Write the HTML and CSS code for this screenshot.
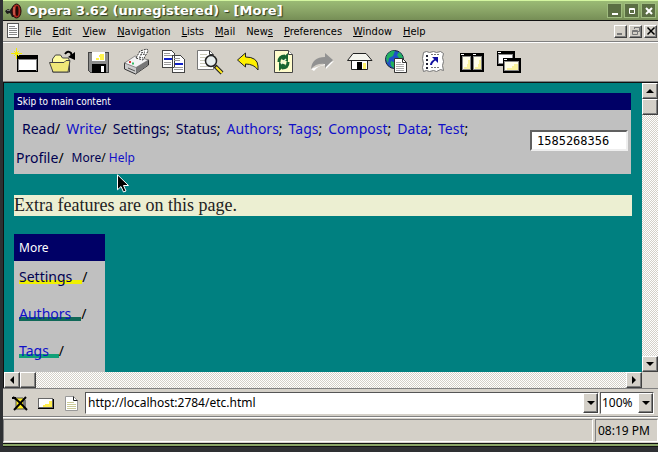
FILE: index.html
```html
<!DOCTYPE html>
<html lang="en">
<head>
<meta charset="utf-8">
<title>Opera 3.62 (unregistered) - [More]</title>
<link rel="stylesheet" href="styles.css">
</head>
<body>
<div class="window">
  <header class="titlebar">
    <svg class="app-icon" viewBox="0 0 18 16"><path fill="#1c1c1c" d="M0 8l3-2 2 1 3-4h2v11H7l-2-4-3 1z"/><path fill="#777" d="M2 7h3v1H2z"/><ellipse cx="11.500" cy="8" rx="4.500" ry="7" fill="#a8281e" stroke="#1a0a0a"/><ellipse cx="12" cy="8" rx="1.500" ry="5" fill="#220a08"/><path stroke="#e08070" d="M9 4v8"/></svg>
    <h1 class="title">Opera 3.62 (unregistered) - [More]</h1>
    <button class="frame-btn" aria-label="Minimize"><svg viewBox="0 0 12 12"><path fill="#fff" d="M3 8h6v2H3z"/></svg></button>
    <button class="frame-btn" aria-label="Maximize"><svg viewBox="0 0 12 12"><path fill="none" stroke="#fff" d="M3.500 3.500h5v5h-5zM3 4.500h6"/></svg></button>
    <button class="frame-btn" aria-label="Close"><svg viewBox="0 0 12 12"><path stroke="#fff" stroke-width="2" d="M3 3l6 6M9 3l-6 6"/></svg></button>
  </header>
  <nav class="menubar" aria-label="Application">
    <svg class="doc-icon" viewBox="0 0 12 16" shape-rendering="crispEdges"><path fill="#fff" stroke="#555" d="M.5 .5h11v14H.5z"/><path stroke="#888" d="M2 3.500h6M2 5.500h8M2 7.500h8M2 9.500h8M2 11.500h8"/></svg>
    <button class="menu"><u>F</u>ile</button>
    <button class="menu"><u>E</u>dit</button>
    <button class="menu"><u>V</u>iew</button>
    <button class="menu"><u>N</u>avigation</button>
    <button class="menu"><u>L</u>ists</button>
    <button class="menu"><u>M</u>ail</button>
    <button class="menu">New<u>s</u></button>
    <button class="menu"><u>P</u>references</button>
    <button class="menu"><u>W</u>indow</button>
    <button class="menu"><u>H</u>elp</button>
    <div class="doc-controls">
      <button class="mini raised" aria-label="Minimize page"><svg viewBox="0 0 10 10"><path fill="#777" d="M1 7h5v2H1z"/></svg></button>
      <button class="mini raised" aria-label="Restore page"><svg viewBox="0 0 10 10"><path fill="none" stroke="#777" d="M3.500 3V1.500h5v4H7M3 1.500h6M1.500 4.500h5v4h-5zM1 5.500h6"/></svg></button>
      <button class="mini raised" aria-label="Close page"><svg viewBox="0 0 10 10"><path stroke="#000" stroke-width="1.500" d="M1.500 1.500l7 7M8.500 1.500l-7 7"/></svg></button>
    </div>
  </nav>
  <div class="toolbar">
    <button class="tool" aria-label="New window"><svg viewBox="0 0 26 26" shape-rendering="crispEdges"><path d="M3 6h21v17H3z"/><path fill="#fff" d="M5 11h17v10H5z"/><path fill="#888" d="M5 10h17v1H5zM4 10h1v12H4zM22 10h1v12h-1z"/><path stroke="#f4ec00" fill="none" d="M2.500 -1v11M-3 4.500h11M0 2l5 5M5 2L0 7"/></svg></button>
    <button class="tool" aria-label="Open"><svg viewBox="0 0 26 26"><path fill="#fffca0" stroke="#444" d="M1.500 23V10l3-4h5l2 3h6l1 3v11z"/><path fill="#efe778" stroke="#444" d="M-1.500 13.500H13l2-2h4l-2 11.500H2z"/><path fill="none" stroke="#000" stroke-width="2" d="M14 5q3-4 6-1l1 4"/><path d="M17 8l7 3V3z"/></svg></button>
    <button class="tool" aria-label="Save"><svg viewBox="0 0 26 26" shape-rendering="crispEdges"><path fill="#8c8c8c" stroke="#444" d="M.5 3.500h20v20h-18l-2-2z"/><path fill="#fff" d="M4 3h13v9H4z"/><path fill="#fff34d" d="M12 5h4v6h-4V8h-1zM8 9h3v2H8z"/><path d="M4 15h14v9H4z"/><path fill="#fff" d="M13 17h3v6h-3z"/></svg></button>
    <button class="tool" aria-label="Print"><svg viewBox="0 0 26 26"><path fill="#ccc" stroke="#333" d="M-.5 14v6l11 5 13-9v-5z"/><path fill="#777" d="M11 18.500l12-7.500v5l-12 8.500z"/><path fill="#f3f3f3" stroke="#666" stroke-width=".7" d="M-.5 14L10 7l13.500 4L11 18.500z"/><path stroke="#555" d="M3 19l7 3"/><path fill="#fff" stroke="#333" stroke-dasharray="2 1" d="M11 9l4-7 7-2 1 2-5 9z"/><path stroke="#333" stroke-dasharray="2 1" d="M16 4l4-1M15 6l5-1M14 8l4 1"/><path stroke="#d33" stroke-width="2" d="M4 13h2"/><path stroke="#3b6" stroke-width="2" d="M7 14.500h2"/></svg></button>
    <button class="tool" aria-label="Copy"><svg viewBox="0 0 26 26" shape-rendering="crispEdges"><path fill="#fff" stroke="#444" d="M.5 1.500h9l3 3v14H.5zM10.500 6.500h8l4 4v13h-12z"/><path stroke="#999" d="M2 4.500h6M2 6.500h8M2 13.500h7M2 15.500h7M12 9.500h6M12 11.500h6M12 18.500h9M12 20.500h9"/><path fill="#1020c8" d="M2 9h8v2H2zM13 14h8v2h-8z"/></svg></button>
    <button class="tool" aria-label="Find"><svg viewBox="0 0 26 26"><path fill="#fff" stroke="#777" d="M-1.500 1.500h12l4 4v15h-16z"/><path fill="none" stroke="#333" d="M10.500 1.500v4h4"/><path stroke="#ccb" d="M1 5.500h7M1 8.500h6M1 11.500h6M1 14.500h7M1 17.500h10"/><circle cx="12" cy="12" r="5.500" fill="#e8eeee" stroke="#222" stroke-width="1.500"/><path stroke="#222" stroke-width="4" d="M16 17l7 7"/><path stroke="#ffe920" stroke-width="2" d="M17 18l6 6"/></svg></button>
    <button class="tool" aria-label="Back"><svg viewBox="0 0 26 26"><path fill="#fff000" stroke="#222" d="M1.500 11l8-7v4q12 0 12.500 9v4q-4-6-12.500-6v3z"/></svg></button>
    <button class="tool" aria-label="Reload"><svg viewBox="0 0 26 26"><path fill="#fffccc" stroke="#444" d="M1.500 1.500h14l4 4v18h-18z"/><path fill="#fff" stroke="#444" d="M15.500 1.500v4h4"/><path fill="none" stroke="#17642f" stroke-width="3" d="M6 13q0-6 6-6M15 13q0 6-6 6"/><path fill="#17642f" d="M15 4v9L8 10zM6 22v-9l7 3z"/><path stroke="#e8f4d8" stroke-width="1.500" d="M8 15l5-5"/></svg></button>
    <button class="tool" aria-label="Forward"><svg viewBox="0 0 26 26"><path fill="#fff" d="M24 12l-8 8v-4Q8 16 4 22l-3-2z"/><path fill="#929292" d="M23 11l-8-7v4Q2 8 1 20q5-6 14-5v4z"/></svg></button>
    <button class="tool" aria-label="Home"><svg viewBox="0 0 26 26"><path fill="#fff" stroke="#222" d="M4.500 10v10.500h16V10"/><path fill="#f5f5ee" stroke="#222" d="M6 4.500h13l6 7H.5z"/><path d="M10 13h5v8h-5z"/><path fill="#fff36b" d="M16 14h3v6h-3z"/></svg></button>
    <button class="tool" aria-label="Web page"><svg viewBox="0 0 26 26"><circle cx="10.500" cy="10.500" r="9" fill="#1e50c8" stroke="#123"/><path fill="#20b060" d="M3 6q4-5 8-4l-2 5-4 2-1 5q-3-4-1-8zM15 3q4 3 4 7l-4-1-2-3zM7 12l5 2-2 5q-5-2-3-7z"/><path fill="#fff" stroke="#333" d="M10.500 9.500h8l4 4v10h-12z"/><path fill="none" stroke="#333" d="M18.500 9.500v4h4"/><path stroke="#aaa" d="M12 13.500h5M12 15.500h8M12 17.500h8M12 19.500h8M12 21.500h8"/></svg></button>
    <button class="tool" aria-label="Bookmarks"><svg viewBox="0 0 26 26"><path fill="#fff" stroke="#777" d="M2.500 3.500l3-1 3 1 4-1 3 1 4-1 3 2-1 4 1 4-1 4 1 5-3-1-4 2-3-1-4 1-3-1-3 1-1-4 1-4-1-5z"/><path stroke="#223" stroke-width="2" stroke-dasharray="2 2" d="M6 6v14"/><path fill="none" stroke="#1010a0" stroke-width="2" d="M10 16q0-3 5-6"/><path fill="#1010a0" d="M11 8h6v6z"/><path stroke="#777" stroke-dasharray="2 1" d="M10 18.500h8M10 5.500h8"/></svg></button>
    <button class="tool" aria-label="Tile"><svg viewBox="-2 0 26 26" shape-rendering="crispEdges"><path d="M0 4h24v19H0z"/><path fill="#fffee8" stroke="#888" d="M2.500 7.500h8v13h-8zM13.500 7.500h8v13h-8z"/><path fill="#faf3a0" d="M8 11h2v9H4v-2h3v-3h1zM19 11h2v9h-6v-2h3v-3h1z"/><path fill="#fff" d="M1 5h3v1H1zM13 5h3v1h-3z"/></svg></button>
    <button class="tool" aria-label="Cascade"><svg viewBox="-3 0 26 26" shape-rendering="crispEdges"><path d="M-1 2h18v15H-1z"/><path fill="#fff" stroke="#888" d="M.5 5.500h14v9H.5z"/><path d="M5 9h18v15H5z"/><path fill="#fffee8" stroke="#888" d="M6.500 12.500h14v9h-14z"/><path fill="#faf3a0" d="M16 15h4v6H9v-2h5v-2h2z"/><path fill="#fff" d="M0 3h3v1H0zM6 10h3v1H6z"/></svg></button>
  </div>
  <div class="viewport">
    <main class="page">
      <section class="site-header">
        <a class="skip" href="#main">Skip to main content</a>
        <div class="site-bar">
          <nav class="site-nav" aria-label="Site">
            <div class="nav-row first">
              <span><a class="seen" href="#">Read</a>/</span>
              <span><a href="#">Write</a>/</span>
              <span><a class="seen" href="#">Settings</a>;</span>
              <span><a class="seen" href="#">Status</a>;</span>
              <span><a href="#">Authors</a>;</span>
              <span><a href="#">Tags</a>;</span>
              <span><a href="#">Compost</a>;</span>
              <span><a href="#">Data</a>;</span>
              <span><a href="#">Test</a>;</span>
            </div>
            <div class="nav-row">
              <span><a class="seen" href="#">Profile</a>/</span>
              <span class="small"><a class="seen" href="#">More</a>/ <a href="#">Help</a></span>
            </div>
          </nav>
          <input class="stamp" type="text" value="1585268356" aria-label="Timestamp">
        </div>
      </section>
      <p class="intro" id="main">Extra features are on this page.</p>
      <section class="side">
        <h2 class="side-title">More</h2>
        <div class="side-row"><a class="mark yellow seen" href="#">Settings</a>/</div>
        <div class="side-row"><a class="mark dark" href="#">Authors</a>/</div>
        <div class="side-row"><a class="mark green" href="#">Tags</a>/</div>
      </section>
      <svg class="pointer" viewBox="0 0 12 19"><path stroke="#fff" d="M.5 .8v15l3.500-3.300 2.500 5.500 2.500-1-2.500-5.500h5z"/></svg>
    </main>
    <div class="scroll vertical">
      <button class="raised arrow" aria-label="Scroll up"><svg viewBox="0 0 8 8"><path d="M4 2l4 4H0z"/></svg></button>
      <div class="raised thumb"></div>
      <button class="raised arrow last" aria-label="Scroll down"><svg viewBox="0 0 8 8"><path d="M4 6l4-4H0z"/></svg></button>
    </div>
    <div class="scroll horizontal">
      <button class="raised arrow" aria-label="Scroll left"><svg viewBox="0 0 8 8"><path d="M2 4l4-4v8z"/></svg></button>
      <div class="raised thumb"></div>
      <button class="raised arrow last" aria-label="Scroll right"><svg viewBox="0 0 8 8"><path d="M6 4L2 0v8z"/></svg></button>
    </div>
    <div class="corner"></div>
  </div>
  <div class="addressbar">
    <button class="status-tool" aria-label="Images off"><svg viewBox="0 0 18 18"><path fill="#ffee20" stroke="#555" d="M5 4h7l2 3v8H5z"/><path fill="#777" d="M12 6h3v9h-3z"/><path fill="none" stroke="#000" stroke-width="2" d="M2 3q6 4 14 13M15 3L3 16M1 4h4"/></svg></button>
    <button class="status-tool" aria-label="Window view"><svg viewBox="0 0 18 18" shape-rendering="crispEdges"><path fill="#fff" stroke="#666" d="M1.500 4.500h14v9h-14z"/><path fill="#ffee50" d="M8 10h4V7h3v6H6v-2h2z"/><path stroke="#000" d="M1 14.500h16M16.500 5v10"/></svg></button>
    <button class="status-tool" aria-label="Document view"><svg viewBox="0 0 18 18"><path fill="#fff" stroke="#999" d="M2.500 2.500h8l4 4v10h-12z"/><path fill="none" stroke="#222" d="M10.500 2.500v4h4"/><path stroke="#cc9" d="M4 8.500h7M4 10.500h9M4 12.500h9M4 14.500h9"/></svg></button>
    <div class="combo">
      <input class="url" type="text" value="http://localhost:2784/etc.html" aria-label="Address">
      <button class="raised drop" aria-label="Show addresses"><svg viewBox="0 0 8 8"><path d="M4 6l4-4H0z"/></svg></button>
    </div>
    <div class="combo zoom">
      <input class="level" type="text" value="100%" aria-label="Zoom">
      <button class="raised drop" aria-label="Zoom levels"><svg viewBox="0 0 8 8"><path d="M4 6l4-4H0z"/></svg></button>
    </div>
  </div>
  <footer class="statusbar">
    <div class="sunken message"></div>
    <div class="sunken clock">08:19 PM</div>
  </footer>
  <div class="frame-bottom"></div>
</div>
</body>
</html>
```
FILE: styles.css
```css
* { box-sizing: border-box; }

body {
  margin: 0;
  background: #2e3033;
  color: #000;
  font-family: "Noto Sans", sans-serif;
  overflow: hidden;
}

button, input { font: inherit; color: inherit; }
button { padding: 0; border: 0; background: none; display: flex; align-items: center; justify-content: center; }
svg { display: block; overflow: visible; }
a { color: #1010c8; text-decoration: none; }
a.seen { color: #000050; }

.window {
  height: 100vh;
  display: flex;
  flex-direction: column;
  padding: 0 0 5px 3px;
}

.titlebar {
  display: flex;
  align-items: center;
  gap: 4px;
  height: 21px;
  padding: 0 3px 0 2px;
  border-top: 1px solid #d3f5a0;
  border-bottom: 1px solid #111;
  background: linear-gradient(#9aba75, #8aa567 50%, #768e56);
}
.app-icon { width: 18px; height: 16px; }
.title {
  flex: 1;
  margin: 0;
  font: bold 13px "DejaVu Sans", sans-serif;
  color: #fff;
  text-shadow: 1px 1px 1px #2c3820;
}
.frame-btn {
  width: 13px;
  height: 13px;
  background: #5b6e43;
  outline: 1px solid #9fbc7e;
}
.frame-btn svg { width: 12px; height: 12px; }

.raised {
  background: #d4d0c8;
  border: 1px solid;
  border-color: #fff #404040 #404040 #fff;
  box-shadow: inset -1px -1px #808080;
}

.menubar {
  display: flex;
  align-items: center;
  height: 21px;
  padding: 0 1px 0 4px;
  background: #d4d0c8;
  border-bottom: 1px solid #808080;
  font-family: "DejaVu Sans Condensed", "DejaVu Sans", sans-serif;
  font-size: 11px;
  font-stretch: condensed;
}
.doc-icon { width: 12px; height: 16px; }
.menu { padding: 2px 5px 0 6px; display: block; line-height: 16px; }
.doc-controls { display: flex; gap: 2px; margin-left: auto; }
.mini { width: 13px; height: 13px; }
.mini svg { width: 10px; height: 10px; }

.toolbar {
  display: flex;
  align-items: center;
  height: 40px;
  padding-left: 5px;
  background: #d4d0c8;
  border-top: 1px solid #fff;
  border-bottom: 1px solid #808080;
}
.tool { width: 37px; height: 36px; }
.tool svg { width: 26px; height: 26px; }

.viewport {
  flex: 1;
  min-height: 0;
  display: grid;
  grid-template: minmax(0, 1fr) 16px / minmax(0, 1fr) 16px;
  border-top: 1px solid #111;
  border-left: 1px solid #111;
}
.page {
  position: relative;
  overflow: hidden;
  padding: 10px;
  background: #008080;
}
.site-header { margin-right: 1px; background: #c0c0c0; }
.skip {
  display: block;
  padding: 0 3px;
  background: #000066;
  color: #fff;
  font: 10px/17px "DejaVu Sans Condensed", "DejaVu Sans", sans-serif;
  font-stretch: condensed;
}
.site-bar { display: flex; align-items: flex-start; padding: 4px 3px 2px 2px; }
.site-nav { flex: 1; font-size: 14px; }
.nav-row { display: flex; gap: 6px; line-height: 29px; white-space: nowrap; }
.nav-row.first { padding-left: 6px; }
.nav-row .small { margin-left: 2px; font-size: 12px; }
.stamp {
  width: 98px;
  height: 21px;
  margin-top: 16px;
  padding: 0 5px;
  border: 2px solid;
  border-color: #606060 #eee #eee #606060;
  border-radius: 0;
  background: #fff;
  font: 12px "DejaVu Sans Mono", monospace;
}
.intro {
  margin: 21px 0 18px;
  background: #ecefd2;
  font: 18px/21px "Liberation Serif", serif;
  color: #222;
}
.side { width: 91px; height: 180px; background: #c0c0c0; }
.side-title {
  margin: 0;
  padding-left: 5px;
  background: #000066;
  color: #fff;
  font-size: 12px;
  font-weight: normal;
  line-height: 27px;
}
.side-row { padding: 6px 5px 11px; font-size: 14px; line-height: 20px; }
.mark { display: inline-block; height: 17px; line-height: 20px; padding-right: 10px; border-bottom: 4px solid; }
.mark.yellow { border-color: #f0f000; }
.mark.dark { border-color: #106858; }
.mark.green { border-color: #10a078; }
.pointer { position: absolute; left: 113px; top: 91px; width: 12px; height: 19px; }

.scroll {
  display: flex;
  background: repeating-conic-gradient(#fff 0 25%, #d4d0c8 0 50%) 0 0 / 2px 2px;
}
.vertical { flex-direction: column; }
.arrow { width: 16px; height: 16px; flex: none; }
.arrow svg, .drop svg { width: 8px; height: 8px; }
.thumb { width: 16px; height: 16px; flex: none; }
.vertical .last { margin-top: auto; }
.horizontal .last { margin-left: auto; }
.corner { background: #d4d0c8; }

.addressbar {
  display: flex;
  align-items: center;
  height: 29px;
  padding: 0 4px;
  background: #d4d0c8;
  border-top: 1px solid #808080;
  border-bottom: 1px solid #808080;
}
.status-tool { width: 26px; height: 24px; }
.status-tool svg { width: 18px; height: 18px; }
.combo {
  flex: 1;
  min-width: 0;
  display: flex;
  height: 22px;
  background: #fff;
  border: 1px solid;
  border-color: #555 #fff #fff #555;
}
.combo.zoom { flex: none; width: 54px; margin-left: 1px; }
.url, .level { flex: 1; min-width: 0; border: 0; padding: 0 2px; background: none; font-size: 12px; }
.level { padding: 0 1px; }
.drop { width: 15px; height: 20px; flex: none; }

.statusbar {
  display: flex;
  gap: 2px;
  height: 26px;
  padding: 1px 0;
  background: #d4d0c8;
  border-top: 1px solid #fff;
}
.sunken { border: 1px solid; border-color: #808080 #fff #fff #808080; }
.message { flex: 1; }
.clock { width: 63px; padding: 0 2px; font-size: 12px; line-height: 22px; white-space: nowrap; }
.frame-bottom {
  height: 4px;
  background: #8aa567;
  border-top: 1px solid #111;
  border-bottom: 1px solid #111;
}
```
